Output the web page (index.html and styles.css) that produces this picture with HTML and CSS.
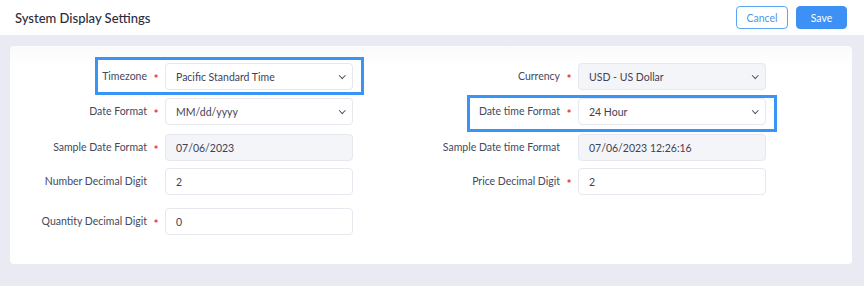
FILE: index.html
```html
<!DOCTYPE html>
<html>
<head>
<meta charset="utf-8">
<link rel="stylesheet" href="styles.css">
</head>
<body>
<header class="topbar">
  <h1 class="title">System Display Settings</h1>
  <div class="actions">
    <button class="btn btn-outline">Cancel</button>
    <button class="btn btn-primary">Save</button>
  </div>
</header>
<main class="page">
  <section class="card">
    <div class="grid">
      <div class="field hl-left">
        <label class="label">Timezone</label><span class="star">*</span>
        <div class="select-wrap"><select class="control"><option>Pacific Standard Time</option></select></div>
      </div>
      <div class="field">
        <label class="label">Currency</label><span class="star">*</span>
        <div class="select-wrap"><select class="control grey"><option>USD - US Dollar</option></select></div>
      </div>
      <div class="field">
        <label class="label">Date Format</label><span class="star">*</span>
        <div class="select-wrap"><select class="control"><option>MM/dd/yyyy</option></select></div>
      </div>
      <div class="field hl-right">
        <label class="label">Date time Format</label><span class="star">*</span>
        <div class="select-wrap"><select class="control"><option>24 Hour</option></select></div>
      </div>
      <div class="field">
        <label class="label">Sample Date Format</label><span class="star">*</span>
        <input class="control grey" value="07/06/2023" readonly>
      </div>
      <div class="field">
        <label class="label">Sample Date time Format</label><span class="star"></span>
        <input class="control grey" value="07/06/2023 12:26:16" readonly>
      </div>
      <div class="field">
        <label class="label">Number Decimal Digit</label><span class="star"></span>
        <input class="control" value="2">
      </div>
      <div class="field">
        <label class="label">Price Decimal Digit</label><span class="star">*</span>
        <input class="control" value="2">
      </div>
      <div class="field">
        <label class="label">Quantity Decimal Digit</label><span class="star">*</span>
        <input class="control" value="0">
      </div>
    </div>
  </section>
</main>
</body>
</html>
```
FILE: styles.css
```css
*, *::before, *::after { box-sizing: border-box; }
html, body { margin: 0; padding: 0; }
body {
  font-family: Lato, "Open Sans", sans-serif;
  color: #3f4254;
  background: #eaeaf2;
  width: 864px;
  height: 286px;
  overflow: hidden;
}
.topbar {
  height: 35px;
  background: #fff;
  display: flex;
  align-items: center;
  justify-content: space-between;
  padding: 0 17px 0 15px;
}
.title {
  margin: 0;
  font-size: 13px;
  font-weight: 500;
  color: #2b2d3d;
}
.actions { display: flex; gap: 8px; }
.btn {
  height: 23px;
  border-radius: 4px;
  font-family: inherit;
  font-size: 10.5px;
  padding: 0;
  cursor: pointer;
}
.btn-outline {
  width: 52px;
  background: #fff;
  border: 1px solid #5aa6f5;
  color: #4a96f0;
}
.btn-primary {
  width: 51px;
  background: #3d90f4;
  border: 1px solid #3d90f4;
  color: #fff;
}
.page { padding: 11px 12px 22px 10px; }
.card {
  background: linear-gradient(#fafafc, #fff 20px);
  border-radius: 4px;
  height: 218px;
  padding: 17px 0 0 10px;
}
.grid {
  display: grid;
  grid-template-columns: 413px 1fr;
  grid-template-rows: 35px 36px 34px 40px 28px;
}
.field {
  display: flex;
  align-items: flex-start;
  position: relative;
}
.label {
  width: 127px;
  text-align: right;
  font-size: 10.5px;
  line-height: 27px;
  color: #45495c;
  white-space: nowrap;
}
.star {
  width: 18px;
  text-align: center;
  color: #ec2a2f;
  font-size: 11px;
  line-height: 31px;
  font-weight: 700;
}
.control {
  width: 188px;
  height: 27px;
  border: 1px solid #e6e7ef;
  border-radius: 4px;
  background: #fff;
  font-family: inherit;
  font-size: 10.5px;
  color: #3f4254;
  padding: 0 10px;
  outline: none;
  appearance: none;
  -webkit-appearance: none;
}
.control.grey { background: #f4f5f8; }
.select-wrap { position: relative; }
.select-wrap::after {
  content: "";
  position: absolute;
  right: 9px;
  top: 10px;
  width: 4.5px;
  height: 4.5px;
  border-right: 1.3px solid #4a4e60;
  border-bottom: 1.3px solid #4a4e60;
  transform: rotate(45deg);
  pointer-events: none;
}
.hl-left::before, .hl-right::before {
  content: "";
  position: absolute;
  border: 3px solid #3894f5;
  pointer-events: none;
}
.hl-left::before { left: 75px; top: -6px; width: 269px; height: 38px; }
.hl-right::before { left: 34px; top: -3px; width: 310px; height: 37px; }
```
